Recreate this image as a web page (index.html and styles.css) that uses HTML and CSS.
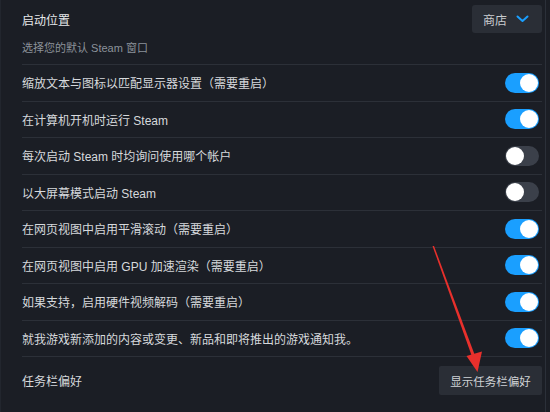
FILE: index.html
```html
<!DOCTYPE html>
<html lang="zh-CN">
<head>
    <meta charset="UTF-8">
    <title>界面设置</title>
    <link rel="stylesheet" href="styles.css">
</head>
<body>
    <div class="panel">
        <!-- 启动位置 -->
        <div class="section-head">
            <span class="title">启动位置</span>
            <button class="dropdown">商店
                <svg width="13" height="8" viewBox="0 0 13 8"><path d="M1.5 1.5 L6.5 6 L11.5 1.5" fill="none" stroke="#1a9fff" stroke-width="2" stroke-linecap="round" stroke-linejoin="round"/></svg>
            </button>
        </div>
        <div class="subtitle">选择您的默认 Steam 窗口</div>

        <div class="row"><span>缩放文本与图标以匹配显示器设置（需要重启）</span><span class="toggle on"></span></div>
        <div class="row"><span>在计算机开机时运行 Steam</span><span class="toggle on"></span></div>
        <div class="row"><span>每次启动 Steam 时均询问使用哪个帐户</span><span class="toggle"></span></div>
        <div class="row"><span>以大屏幕模式启动 Steam</span><span class="toggle"></span></div>
        <div class="row"><span>在网页视图中启用平滑滚动（需要重启）</span><span class="toggle on"></span></div>
        <div class="row"><span>在网页视图中启用 GPU 加速渲染（需要重启）</span><span class="toggle on"></span></div>
        <div class="row"><span>如果支持，启用硬件视频解码（需要重启）</span><span class="toggle on"></span></div>
        <div class="row"><span>就我游戏新添加的内容或变更、新品和即将推出的游戏通知我。</span><span class="toggle on"></span></div>

        <div class="row last">
            <span>任务栏偏好</span>
            <button class="btn">显示任务栏偏好</button>
        </div>
    </div>

    <!-- 标注箭头 -->
    <svg class="arrow" width="550" height="412" viewBox="0 0 550 412">
        <polygon points="432.5,246 434,246 475.5,357 472.5,358" fill="#e8302c"/>
        <polygon points="466.5,356 482,351.5 477.5,372" fill="#e8302c"/>
    </svg>
</body>
</html>
```

FILE: styles.css
```css
body {
    margin: 0;
    background-color: #1b1e25;
    font-family: "Liberation Sans", "Noto Sans CJK SC", sans-serif;
    color: #dcdedf;
    font-size: 12px;
}
.panel {
    width: 546px;
    height: 412px;
    box-sizing: border-box;
    padding: 5px 3px 0 21px;
    border-left: 1px solid #22262e;
    border-right: 1px solid #2b3039;
}
.section-head {
    display: flex;
    justify-content: space-between;
    align-items: center;
    height: 28px;
}
.title {
    color: #e6e8ea;
}
.dropdown {
    display: flex;
    align-items: center;
    gap: 9px;
    height: 28px;
    width: 70px;
    padding: 0 0 0 11px;
    border: none;
    border-radius: 3px;
    background-color: #2a2e36;
    color: #c8ccd0;
    font-family: inherit;
    font-size: 12px;
}
.subtitle {
    margin-top: 7px;
    line-height: 16px;
    padding-bottom: 8px;
    font-size: 11px;
    color: #8b929a;
}
.row {
    display: flex;
    justify-content: space-between;
    align-items: center;
    height: 35.5px;
    border-top: 1px solid #2c3038;
    color: #d6d9dc;
}
.toggle {
    position: relative;
    width: 34px;
    height: 20px;
    margin-right: 3px;
    border-radius: 10px;
    background-color: #3b404a;
}
.toggle::after {
    content: "";
    position: absolute;
    top: 1px;
    left: 1px;
    width: 18px;
    height: 18px;
    border-radius: 50%;
    background-color: #ffffff;
}
.toggle.on {
    background-color: #1a9fff;
}
.toggle.on::after {
    left: 15px;
}
.row.last {
    height: 46px;
    padding-top: 2px;
    box-sizing: border-box;
}
.btn {
    height: 29px;
    width: 103px;
    border: none;
    border-radius: 2px;
    background-color: #2a2e36;
    color: #d0d3d6;
    font-family: inherit;
    font-size: 11.5px;
}
.arrow {
    position: absolute;
    top: 0;
    left: 0;
    pointer-events: none;
}
```
